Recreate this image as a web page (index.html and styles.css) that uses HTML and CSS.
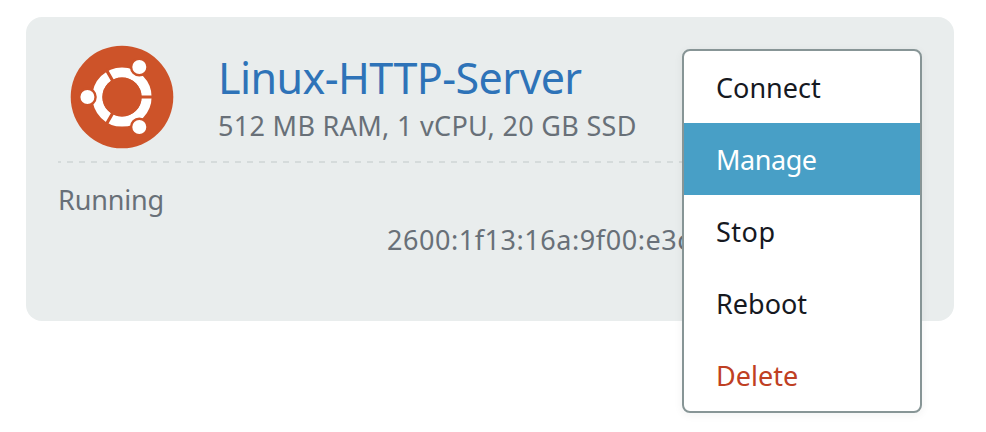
FILE: index.html
```
<!DOCTYPE html>
<html lang="en">
<head>
<meta charset="utf-8">
<title>Instances</title>
<link rel="stylesheet" href="styles.css">
</head>
<body>
<main class="card">
  <header class="card-header">
    <svg class="logo" viewBox="-52 -52 104 104" aria-label="Ubuntu">
      <circle class="orange" r="51.3"/>
      <circle class="ring" r="24.6"/>
      <path class="cuts" d="M0 0H32M0 0L-16 -27.7M0 0L-16 27.7"/>
      <circle class="orange" r="19.6"/>
      <g class="heads">
        <circle cx="-34.6" cy="0" r="8.2"/>
        <circle cx="17.3" cy="-30" r="8.2"/>
        <circle cx="17.3" cy="30" r="8.2"/>
      </g>
    </svg>
    <div class="info">
      <h1 class="name"><span>Linux-HTTP-Server</span></h1>
      <p class="specs"><span>512 MB RAM, 1 vCPU, 20 GB SSD</span></p>
    </div>
  </header>
  <section class="details">
    <p class="status"><span>Running</span></p>
    <p class="address"><span>2600:1f13:16a:9f00:e3c</span></p>
  </section>
  <ul class="menu">
    <li class="connect"><span>Connect</span></li>
    <li class="active"><span>Manage</span></li>
    <li class="stop"><span>Stop</span></li>
    <li class="reboot"><span>Reboot</span></li>
    <li class="danger"><span>Delete</span></li>
  </ul>
</main>
</body>
</html>
```
FILE: styles.css
```
* { box-sizing: border-box; margin: 0; padding: 0; }
body {
  min-height: 432px;
  padding: 17px 0 0 26px;
  background: #fff;
  font-family: "Noto Sans", sans-serif;
  font-size: 27px;
  color: #687078;
}
.card {
  position: relative;
  width: 928px;
  height: 304px;
  padding: 0 32px;
  border-radius: 16px;
  background: #e9eded;
}
.card-header {
  display: flex;
  height: 146px;
  padding: 28px 0 0 12px;
  gap: 44px;
  background: repeating-linear-gradient(90deg, #d5dbdb 0 6px, transparent 6px 12px) -3px 100% / 1200px 2px no-repeat;
}
.logo { flex: none; width: 104px; height: 104px; }
.info { padding-top: 2px; white-space: nowrap; }
.orange { fill: #cd5329; }
.ring { fill: none; stroke: #fff; stroke-width: 10; }
.cuts { fill: none; stroke: #cd5329; stroke-width: 3.2; }
.heads { fill: #fff; stroke: #cd5329; stroke-width: 2.4; }
.name {
  font-size: 43px;
  font-weight: 400;
  line-height: 62px;
  letter-spacing: -0.57px;
  color: #2e73b8;
}
.specs { line-height: 34px; letter-spacing: 0.31px; }
.details { padding-top: 17px; line-height: 40px; }
.status { letter-spacing: -0.15px; }
.address { padding-left: 329px; letter-spacing: 0.55px; white-space: nowrap; }
.menu {
  position: absolute;
  top: 32px;
  left: 656px;
  width: 240px;
  overflow: hidden;
  border: 2px solid #879596;
  border-radius: 8px;
  background: #fff;
  box-shadow: 0 2px 10px rgba(0, 28, 36, 0.06);
  color: #16191f;
  list-style: none;
}
.menu li { height: 72px; padding-left: 32px; line-height: 74px; }
.menu .active { background: #489fc6; color: #fff; letter-spacing: -0.45px; }
.menu .stop { letter-spacing: 0.5px; }
.menu .danger { color: #bf4023; }
```
